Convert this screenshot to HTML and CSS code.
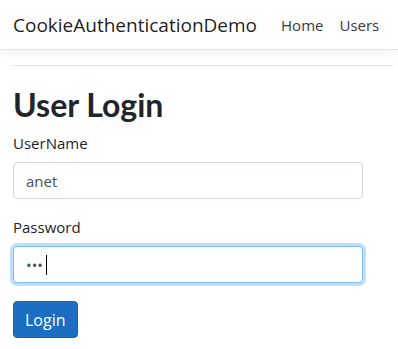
FILE: index.html
```html
<!DOCTYPE html>
<html lang="en">
<head>
    <meta charset="UTF-8">
    <meta name="viewport" content="width=device-width, initial-scale=1.0">
    <title>User Login - CookieAuthenticationDemo</title>
    <link rel="stylesheet" href="styles.css">
</head>
<body>
    <header class="navbar">
        <a class="navbar-brand" href="#">CookieAuthenticationDemo</a>
        <nav class="navbar-nav">
            <a class="nav-link" href="#">Home</a>
            <a class="nav-link" href="#">Users</a>
        </nav>
    </header>

    <div class="container">
        <hr>
        <h1>User Login</h1>

        <form class="login-form">
            <div class="form-group">
                <label for="username">UserName</label>
                <input type="text" id="username" class="form-control" value="anet">
            </div>
            <div class="form-group">
                <label for="password">Password</label>
                <div class="input-wrap">
                    <input type="password" id="password" class="form-control focused" value="abc">
                    <span class="caret"></span>
                </div>
            </div>
            <button type="submit" class="btn btn-primary">Login</button>
        </form>
    </div>
</body>
</html>
```

FILE: styles.css
```css
* {
    box-sizing: border-box;
}
body {
    font-family: "Open Sans", "Noto Sans", Arial, sans-serif;
    font-size: 15px;
    color: #212529;
    background: #fff;
    margin: 0;
    padding: 0;
}
.navbar {
    display: flex;
    align-items: center;
    height: 50px;
    padding: 0 13px;
    border-bottom: 1px solid #e5e5e5;
    box-shadow: 0 4px 12px rgba(0,0,0,0.05);
    white-space: nowrap;
    overflow: hidden;
}
.navbar-brand {
    font-size: 19px;
    color: rgba(0,0,0,0.9);
    text-decoration: none;
    margin-right: 24px;
}
.navbar-nav {
    display: flex;
    gap: 16px;
}
.nav-link {
    font-size: 15px;
    color: #343a40;
    text-decoration: none;
}
.container {
    padding: 0 5px 0 13px;
}
hr {
    border: 0;
    border-top: 1px solid #e3e3e3;
    margin: 15px 0 0;
}
h1 {
    font-family: Lato, "Open Sans", Arial, sans-serif;
    font-size: 32px;
    font-weight: 700;
    line-height: 1.2;
    margin: 20px 0 9px;
}
.login-form {
    display: flex;
    flex-direction: column;
    align-items: flex-start;
    gap: 18px;
}
.form-group {
    width: 350px;
}
label {
    display: block;
    margin-bottom: 9px;
}
.form-control {
    display: block;
    width: 100%;
    height: 37px;
    padding: 5px 12px;
    font-family: inherit;
    font-size: 15px;
    color: #495057;
    border: 1px solid #ced4da;
    border-radius: 4px;
    background: #fff;
    outline: none;
}
.form-control.focused {
    border-color: #80bdff;
    box-shadow: 0 0 0 3px rgba(0,123,255,0.25);
}
.input-wrap {
    position: relative;
}
.caret {
    position: absolute;
    left: 33px;
    top: 9px;
    width: 1px;
    height: 20px;
    background: #000;
}
.btn {
    font-family: inherit;
    font-size: 16px;
    height: 37px;
    padding: 0 11px;
    border-radius: 4px;
    cursor: pointer;
}
.btn-primary {
    color: #fff;
    background-color: #1b6ec2;
    border: 1px solid #1861ac;
}
```
